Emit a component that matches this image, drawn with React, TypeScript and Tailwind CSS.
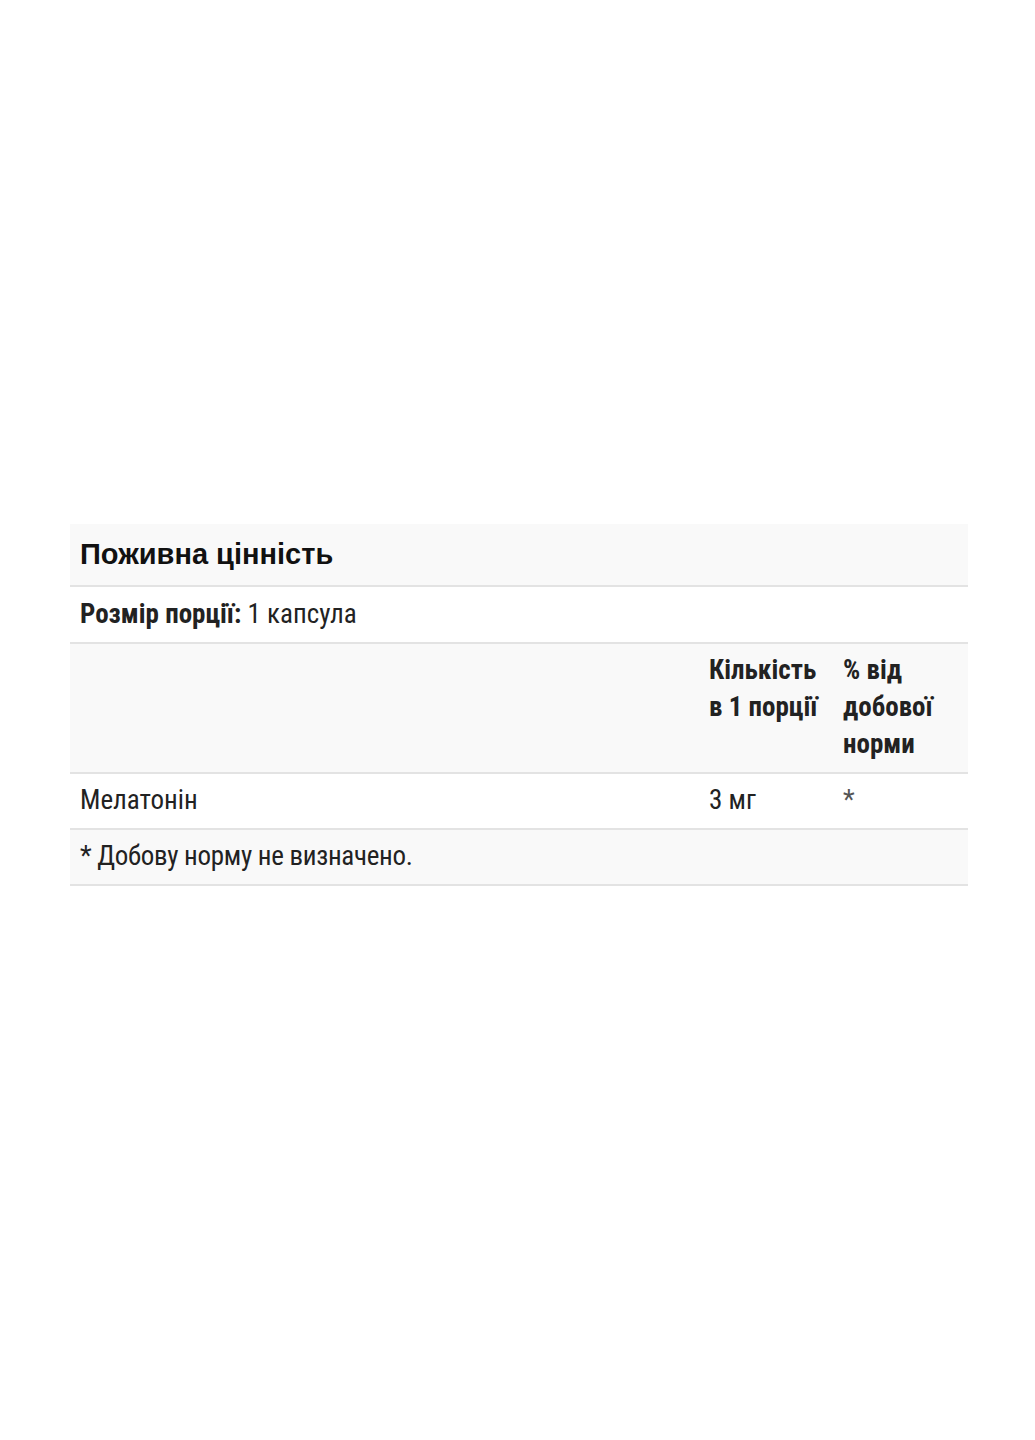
export default function App() {
  return (
    <div className="min-h-[1440px] w-[1035px] bg-white pt-[524px] font-['Roboto_Condensed','Roboto',sans-serif] text-[#222]">
      <table className="ml-[70px] w-[898px] table-fixed border-collapse text-[27px] leading-[37px]">
        <colgroup>
          <col className="w-[629px]" />
          <col className="w-[134px]" />
          <col className="w-[135px]" />
        </colgroup>
        <thead>
          <tr className="border-b-2 border-[#e3e3e3] bg-[#f9f9f9]">
            <th
              colSpan={3}
              className="h-[62px] px-[10px] text-left align-middle font-['Liberation_Sans',Arial,sans-serif] text-[29px] font-bold text-[#111]"
            >
              Поживна цінність
            </th>
          </tr>
        </thead>
        <tbody>
          <tr className="border-b-2 border-[#e3e3e3] bg-white">
            <td colSpan={3} className="h-[56px] px-[10px] py-[9px] align-top">
              <span className="font-bold">Розмір порції:</span> 1 капсула
            </td>
          </tr>
          <tr className="border-b-2 border-[#e3e3e3] bg-[#f9f9f9] font-bold">
            <td className="px-[10px] pt-[8px] pb-[9px]"></td>
            <td className="whitespace-nowrap px-[10px] pt-[8px] pb-[9px] align-top">
              Кількість
              <br />в 1 порції
            </td>
            <td className="whitespace-nowrap px-[10px] pt-[8px] pb-[9px] align-top">
              % від
              <br />
              добової
              <br />
              норми
            </td>
          </tr>
          <tr className="border-b-2 border-[#e3e3e3] bg-white">
            <td className="px-[10px] pt-[8px] pb-[9px] align-top">Мелатонін</td>
            <td className="px-[10px] pt-[8px] pb-[9px] align-top">3 мг</td>
            <td className="px-[10px] pt-[8px] pb-[9px] align-top text-[#555]">*</td>
          </tr>
          <tr className="border-b-2 border-[#e3e3e3] bg-[#f9f9f9]">
            <td colSpan={3} className="px-[10px] pt-[8px] pb-[9px] align-top tracking-[-0.3px]">
              * Добову норму не визначено.
            </td>
          </tr>
        </tbody>
      </table>
    </div>
  );
}
